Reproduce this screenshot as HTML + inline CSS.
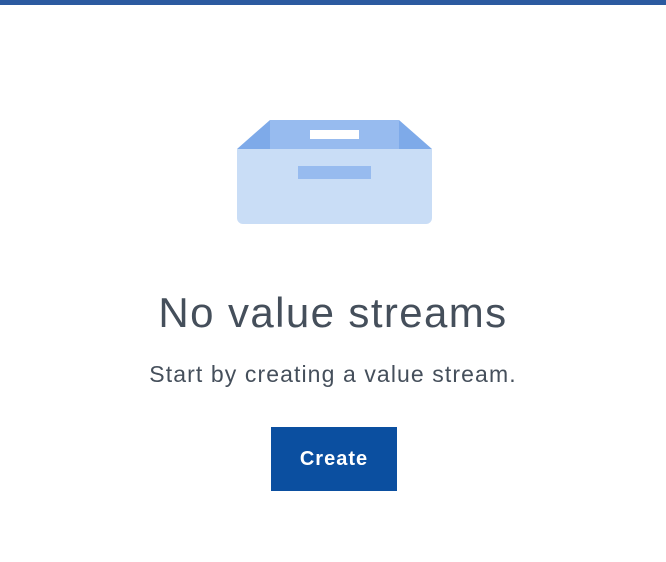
<!DOCTYPE html>
<html><head><meta charset="utf-8"><style>
html,body{margin:0;padding:0;background:#fff;width:666px;height:562px;overflow:hidden;font-family:"Liberation Sans",Arial,sans-serif}
.bar{position:absolute;left:0;top:0;width:666px;height:5px;background:#2c5aa0}
.t{position:absolute;left:0;width:666px;text-align:center;color:#454f5b;white-space:nowrap}
.h{top:288px;font-size:42px;line-height:50px;letter-spacing:1.4px}
.s{top:359px;font-size:23px;line-height:30px;letter-spacing:1.1px}
.btn{position:absolute;left:271px;top:427px;width:126px;height:64px;background:#0b4fa0;color:#fff;font-weight:bold;font-size:20px;line-height:64px;text-align:center;letter-spacing:1px}
</style></head><body>
<div class="bar"></div>
<svg style="position:absolute;left:0;top:0" width="666" height="300">
<rect x="270" y="120" width="129" height="30" fill="#97bbef"/>
<polygon points="270,120 237,149 270,149" fill="#7eaae9"/>
<polygon points="399,120 432,149 399,149" fill="#7eaae9"/>
<rect x="310" y="130" width="49" height="9" fill="#fff"/>
<path d="M237 149 H432 V218 a6 6 0 0 1 -6 6 H243 a6 6 0 0 1 -6 -6 Z" fill="#c9ddf6"/>
<rect x="298" y="166" width="73" height="13" fill="#97bbef"/>
</svg>
<div class="t h">No value streams</div>
<div class="t s">Start by creating a value stream.</div>
<div class="btn">Create</div>
</body></html>
